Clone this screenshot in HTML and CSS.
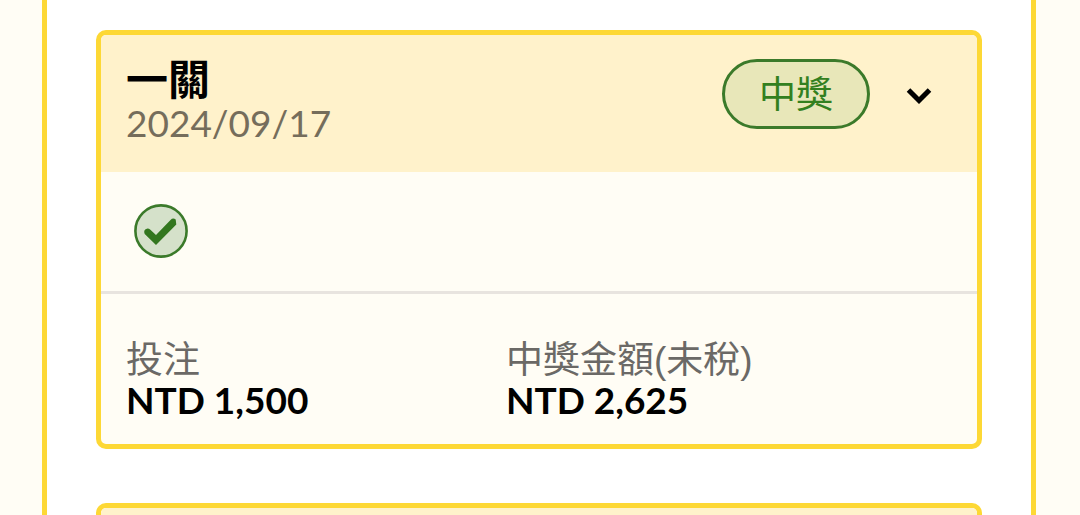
FILE: index.html
```html
<!DOCTYPE html>
<html lang="zh-Hant">
<head>
<meta charset="utf-8">
<meta name="viewport" content="width=device-width, initial-scale=1">
<title>中獎</title>
<link rel="stylesheet" href="styles.css">
</head>
<body>
<main class="page">
  <section class="panel">
    <article class="card">
      <header class="card-head">
        <div class="card-heading">
          <h2 class="card-title">一關</h2>
          <time class="card-date" datetime="2024-09-17">2024/09/17</time>
        </div>
        <span class="badge">中獎</span>
        <button class="toggle" type="button" aria-label="展開" aria-expanded="false">
          <svg class="chevron" viewBox="0 0 28 20" aria-hidden="true"><path d="M3.500 4 L14 14.500 L24.500 4"/></svg>
        </button>
      </header>
      <div class="status">
        <svg class="check" viewBox="0 0 54 54" role="img" aria-label="中獎">
          <circle cx="27" cy="27" r="25.600"/>
          <path class="tick" d="M13.500 24.500 a3.600 3.600 0 0 1 2.600 1 L22 31 L36.500 16 Q39 13.500 41.700 15.500 L42.300 20.500 L22 41 L10.700 30 Q8.800 25.500 13.500 24.500 Z"/>
        </svg>
      </div>
      <dl class="amounts">
        <div class="amount">
          <dt>投注</dt>
          <dd>NTD 1,500</dd>
        </div>
        <div class="amount">
          <dt>中獎金額(未稅)</dt>
          <dd>NTD 2,625</dd>
        </div>
      </dl>
    </article>
    <article class="card">
      <header class="card-head"></header>
    </article>
  </section>
</main>
</body>
</html>
```
FILE: styles.css
```css
* {
  box-sizing: border-box;
}

body {
  margin: 0;
  background: #fffdf5;
  color: #000;
  font-family: Lato, "Noto Sans CJK TC", sans-serif;
  font-size: 37px;
}

.page {
  height: 100vh;
  overflow: hidden;
  padding: 0 44px 0 42px;
}

.panel {
  display: flex;
  flex-direction: column;
  gap: 54px;
  min-height: 100%;
  padding: 30px 49px;
  background: #fff;
  border: solid #fdd835;
  border-width: 0 5px;
}

.card {
  overflow: hidden;
  background: #fffdf5;
  border: 5px solid #fdd835;
  border-radius: 10px;
}

.card-head {
  display: flex;
  align-items: flex-start;
  padding: 24px 34px 25px 25px;
  background: #fff2cb;
}

.card-heading {
  flex: 1;
}

.card-title {
  margin: -2px 0 0;
  font-size: 42px;
  font-weight: 700;
  line-height: 44px;
}

.card-date {
  display: block;
  color: #756d5b;
  line-height: 44px;
  padding-bottom: 2px;
}

.badge {
  padding: 0 34px;
  border: 3px solid #3b7a2a;
  border-radius: 35px;
  background: #e8e7b9;
  color: #33801f;
  line-height: 64px;
}

.toggle {
  display: flex;
  align-items: center;
  justify-content: center;
  width: 48px;
  height: 74px;
  margin-left: 25px;
  padding: 0;
  border: 0;
  background: none;
  cursor: pointer;
}

.chevron {
  width: 28px;
  height: 20px;
  fill: none;
  stroke: #000;
  stroke-width: 5;
}

.status {
  padding: 32px 33px 33px;
  border-bottom: 3px solid #e8e4df;
}

.check {
  display: block;
  width: 54px;
  height: 54px;
}

.check circle {
  fill: #d5e1ca;
  stroke: #3b7a2a;
  stroke-width: 2.600;
}

.tick {
  fill: #33771f;
}

.amounts {
  display: grid;
  grid-template-columns: 23fr 27fr;
  margin: 0;
  padding: 48px 25px 24px;
}

.amount dt {
  color: #6b6966;
  font-family: "Liberation Sans", "Noto Sans CJK TC", sans-serif;
  line-height: 38px;
}

.amount dd {
  margin: 0;
  font-weight: 700;
  line-height: 40px;
}
```
